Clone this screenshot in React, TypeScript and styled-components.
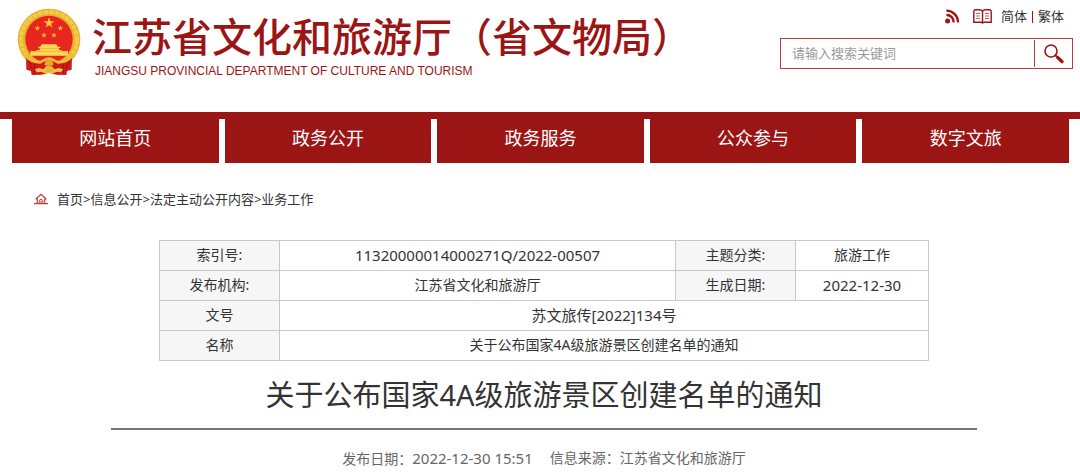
import React from "react";
import styled, { createGlobalStyle } from "styled-components";

const red = "#9c1515";

const GlobalStyle = createGlobalStyle`
  * { box-sizing: border-box; }
  body {
    margin: 0;
    background: #fff;
    color: #333;
    font-family: "Noto Sans", "Noto Sans CJK SC", sans-serif;
    font-size: 14px;
  }
  a { color: inherit; text-decoration: none; }
`;

const Header = styled.header`
  display: flex;
  justify-content: space-between;
  align-items: flex-start;
  min-height: 112px;
  padding: 8px 7px 0 17px;
`;

const Brand = styled.a`
  display: flex;
  gap: 11px;
`;

const BrandText = styled.div`
  color: ${red};
`;

const SiteName = styled.div`
  font-family: "Noto Sans CJK SC", sans-serif;
  font-size: 40px;
  font-weight: 500;
  line-height: 54px;
  white-space: nowrap;
`;

const SiteNameEn = styled.div`
  padding: 2px 0 0 3px;
  font-family: "Liberation Sans", sans-serif;
  font-size: 12px;
  line-height: 14px;
  white-space: nowrap;
`;

const Tools = styled.div`
  display: flex;
  flex-direction: column;
  align-items: flex-end;
  gap: 13px;
  width: 293px;
`;

const QuickLinks = styled.div`
  display: flex;
  align-items: center;
  gap: 5px;
  height: 17px;
  padding-right: 9px;
  font-size: 13px;
  line-height: 17px;
`;

const IconLink = styled.a<{ $gap: number }>`
  display: flex;
  margin-right: ${(p) => p.$gap}px;
`;

const Divider = styled.span`
  width: 1px;
  height: 12px;
  background: ${red};
`;

const SearchForm = styled.form`
  display: flex;
  align-items: center;
  width: 100%;
  height: 31px;
  border: 1px solid #b33e3e;
`;

const SearchInput = styled.input`
  flex: 1;
  min-width: 0;
  height: 27px;
  padding: 0 11px 2px;
  border: 0;
  border-right: 1px solid #b33e3e;
  outline: 0;
  font: inherit;
  font-size: 13px;
  &::placeholder { color: #999; opacity: 1; }
`;

const SearchButton = styled.button`
  display: flex;
  align-items: center;
  justify-content: center;
  width: 37px;
  height: 29px;
  padding: 0;
  border: 0;
  background: none;
  cursor: pointer;
`;

const Nav = styled.nav`
  display: grid;
  grid-template-columns: repeat(5, 1fr);
  gap: 6px;
  padding: 0 11px 0 12px;
  border-top: 7px solid ${red};
`;

const NavLink = styled.a`
  background: ${red};
  color: #fff;
  font-size: 18px;
  line-height: 38px;
  padding-bottom: 6px;
  text-align: center;
`;

const Crumbs = styled.nav`
  display: flex;
  align-items: center;
  gap: 9px;
  padding: 26px 34px 0;
  font-size: 13px;
  line-height: 20px;
`;

const Article = styled.main`
  max-width: 874px;
  margin: 31px auto 0;
  padding-left: 8px;
`;

const InfoTable = styled.table`
  width: 770px;
  max-width: 100%;
  margin: 0 auto;
  border-collapse: collapse;
  table-layout: fixed;
`;

const LabelCol = styled.col`
  width: 120px;
`;

const ShortCol = styled.col`
  width: 133px;
`;

const cell = `
  height: 30px;
  padding: 0 0 2px;
  border: 1px solid #c8c8c8;
  font-weight: 400;
  line-height: 20px;
  text-align: center;
`;

const Label = styled.th`
  ${cell}
  background: #f6f6f6;
`;

const Value = styled.td<{ $code?: boolean }>`
  ${cell}
  font-size: ${(p) => (p.$code ? 15 : 14)}px;
`;

const Title = styled.h1`
  margin: 0;
  padding: 12px 0;
  border-bottom: 2px solid #777;
  font-size: 29px;
  font-weight: 400;
  line-height: 43px;
  text-align: center;
`;

const Meta = styled.div`
  display: flex;
  justify-content: center;
  gap: 17px;
  padding: 18px 0 4px;
  color: #666;
  line-height: 20px;
`;

const DateTime = styled.time`
  font-size: 15px;
`;

const star = (cx: number, cy: number, r: number) =>
  Array.from({ length: 10 }, (_, i) => {
    const a = (Math.PI / 5) * i - Math.PI / 2;
    const d = i % 2 ? r * 0.4 : r;
    return `${cx + d * Math.cos(a)},${cy + d * Math.sin(a)}`;
  }).join(" ");

const Emblem = () => (
  <svg width="64" height="68" viewBox="50 24 192 204" aria-hidden="true">
    <ellipse cx="146" cy="118" rx="94" ry="92" fill="#e5b32c" />
    <ellipse cx="146" cy="118" rx="84" ry="82" fill="none" stroke="#f3cb48" strokeWidth="12" strokeDasharray="14 3" />
    <circle cx="146" cy="118" r="71" fill="#e8251f" />
    <polygon points={star(146, 69, 17)} fill="#f9c93a" />
    <polygon points={star(111, 85, 9)} fill="#f4b93a" />
    <polygon points={star(180, 85, 9)} fill="#f4b93a" />
    <polygon points={star(131, 106, 9)} fill="#f4b93a" />
    <polygon points={star(161, 106, 9)} fill="#f4b93a" />
    <path d="M124 133 H168 L172 140 H180 V144 H176 V150 H184 V153 H203 V167 H90 V153 H109 V150 H118 V144 H114 V140 H120Z" fill="#fbd957" />
    <path d="M118 146 H176 M92 154 H202" stroke="#e9a32b" strokeWidth="2" />
    <path d="M77 168 Q96 186 116 186 H176 Q196 186 215 168 L214 209 L200 213 L198 225 L168 224 L146 218 L124 224 L94 225 L92 213 L78 209Z" fill="#cf1b1d" />
    <path d="M86 182 L96 208 M206 182 L196 208 M104 192 L102 221 M188 192 L190 221" stroke="#a31216" strokeWidth="3" />
    <path d="M77 160 Q96 184 120 182 L136 174 Q146 170 156 174 L172 182 Q196 184 215 160 L221 166 Q205 192 172 191 L157 183 Q146 179 135 183 L120 191 Q87 192 71 166Z" fill="#eebd38" />
    <path d="M135 184 Q146 176 157 184 L160 194 Q146 202 132 194Z" fill="#e5a92a" />
    <path d="M103 208 L116 204 L130 208 L137 199 H155 L162 208 L176 204 L189 208 L182 217 L170 215 L158 220 H134 L122 215 L110 217Z" fill="#f1c444" />
    <path d="M136 207 H156 M134 213 H158" stroke="#d9982a" strokeWidth="2" />
  </svg>
);

const RssIcon = () => (
  <svg width="15" height="15" viewBox="0 0 15 15" fill="none" stroke={red} aria-hidden="true">
    <circle cx="2.6" cy="12" r="2.5" fill={red} stroke="none" />
    <path d="M1.4 6 A6.8 6.8 0 0 1 8.6 13.4" strokeWidth="2.4" />
    <path d="M1.4 1.6 A11.5 11.5 0 0 1 13 13.4" strokeWidth="2.4" />
  </svg>
);

const BookIcon = () => (
  <svg width="19" height="15" viewBox="0 0 19 15" fill="none" stroke={red} aria-hidden="true">
    <path d="M9.5 2.3 Q8.5 .8 6.5 .8 H2.2 Q.8 1 .8 2.4 V13.3 H8 L9.5 14 L11 13.3 H18.2 V2.4 Q18.2 1 16.8 .8 H12.5 Q10.5 .8 9.5 2.3Z M9.5 2.3 V13.5" strokeWidth="1.4" />
    <path d="M3 4.5 H7 M3 7 H7 M3 9.5 H7 M12 4.5 H16 M12 7 H16 M12 9.5 H16" strokeWidth="1" opacity=".65" />
  </svg>
);

const SearchIcon = () => (
  <svg width="20" height="20" viewBox="0 0 20 20" fill="none" stroke={red} aria-hidden="true">
    <circle cx="7" cy="7" r="6" strokeWidth="1.6" />
    <path d="M11.4 11.2 L14 13.7" strokeWidth="2" />
    <path d="M14 13.7 L18 17.6" strokeWidth="3.4" strokeLinecap="round" />
  </svg>
);

const HomeIcon = () => (
  <svg width="14" height="12" viewBox="0 0 14 12" fill="none" stroke="#c43c3c" aria-hidden="true">
    <path d="M1.6 6.2 L7 1.2 L12.4 6.2 M3.3 5.5 V10.5 M10.7 5.5 V10.5 M0 10.6 H14" strokeWidth="1.2" />
    <path d="M5.2 10 V7.5 Q7 4.6 8.8 7.5 V10 M7 7.5 V10" strokeWidth="1" />
  </svg>
);

const navItems = ["网站首页", "政务公开", "政务服务", "公众参与", "数字文旅"];
const crumbs = ["首页", "信息公开", "法定主动公开内容", "业务工作"];

export default function App() {
  return (
    <>
      <GlobalStyle />
      <Header>
        <Brand href="#">
          <Emblem />
          <BrandText>
            <SiteName>江苏省文化和旅游厅（省文物局）</SiteName>
            <SiteNameEn>JIANGSU PROVINCIAL DEPARTMENT OF CULTURE AND TOURISM</SiteNameEn>
          </BrandText>
        </Brand>
        <Tools>
          <QuickLinks>
            <IconLink href="#" aria-label="RSS" $gap={8}><RssIcon /></IconLink>
            <IconLink href="#" aria-label="阅读" $gap={4}><BookIcon /></IconLink>
            <a href="#">简体</a>
            <Divider />
            <a href="#">繁体</a>
          </QuickLinks>
          <SearchForm onSubmit={(e) => e.preventDefault()}>
            <SearchInput type="text" aria-label="搜索" placeholder="请输入搜索关键词" />
            <SearchButton type="submit" aria-label="搜索"><SearchIcon /></SearchButton>
          </SearchForm>
        </Tools>
      </Header>
      <Nav>
        {navItems.map((item) => (
          <NavLink href="#" key={item}>{item}</NavLink>
        ))}
      </Nav>
      <Crumbs aria-label="当前位置">
        <HomeIcon />
        <div>
          {crumbs.map((item, i) => (
            <React.Fragment key={item}>
              {i > 0 && ">"}
              <a href="#">{item}</a>
            </React.Fragment>
          ))}
        </div>
      </Crumbs>
      <Article>
        <InfoTable>
          <colgroup>
            <LabelCol />
            <col />
            <LabelCol />
            <ShortCol />
          </colgroup>
          <tbody>
            <tr>
              <Label scope="row">索引号:</Label>
              <Value $code>11320000014000271Q/2022-00507</Value>
              <Label scope="row">主题分类:</Label>
              <Value>旅游工作</Value>
            </tr>
            <tr>
              <Label scope="row">发布机构:</Label>
              <Value>江苏省文化和旅游厅</Value>
              <Label scope="row">生成日期:</Label>
              <Value $code>2022-12-30</Value>
            </tr>
            <tr>
              <Label scope="row">文号</Label>
              <Value $code colSpan={3}>苏文旅传[2022]134号</Value>
            </tr>
            <tr>
              <Label scope="row">名称</Label>
              <Value colSpan={3}>关于公布国家4A级旅游景区创建名单的通知</Value>
            </tr>
          </tbody>
        </InfoTable>
        <Title>关于公布国家4A级旅游景区创建名单的通知</Title>
        <Meta>
          <span>发布日期：<DateTime dateTime="2022-12-30T15:51">2022-12-30 15:51</DateTime></span>
          <span>信息来源：江苏省文化和旅游厅</span>
        </Meta>
      </Article>
    </>
  );
}
